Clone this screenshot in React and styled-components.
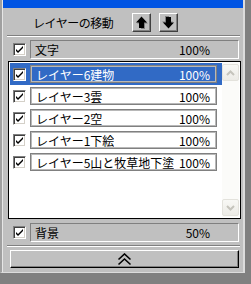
import React from "react";
import styled, { createGlobalStyle } from "styled-components";

const Global = createGlobalStyle`
  html, body { margin: 0; padding: 0; }
  body {
    background: #808080;
    font-family: "Noto Sans CJK JP", "Liberation Sans", sans-serif;
    font-size: 12px;
    color: #000;
  }
`;

const Panel = styled.div`
  width: 241px;
  height: 272px;
  background: #c0c0c0;
  border-left: 2px solid #a0a0a0;
  border-right: 2px solid #dcdcdc;
  border-bottom: 1px solid #dcdcdc;
  box-shadow: inset 1px 0 0 #e6e6e6;
  display: flex;
  flex-direction: column;
`;

const TitleBar = styled.div`
  height: 8px;
  margin-left: 1px;
  background: #0054e3;
  flex: none;
`;

const Header = styled.div`
  height: 27px;
  box-sizing: border-box;
  padding: 5px 0 0 31px;
  display: flex;
  align-items: flex-start;
  flex: none;
`;

const Label = styled.div`
  width: 99px;
  line-height: 19px;
  font-size: 12px;
  letter-spacing: -0.5px;
  white-space: nowrap;
`;

const ArrowButton = styled.div`
  width: 19px;
  height: 19px;
  box-sizing: border-box;
  margin-right: ${(p) => p.$gap || 0}px;
  border: 1px solid;
  border-color: #fff #404040 #404040 #fff;
  box-shadow: inset -1px -1px 0 #808080;
  background: #c0c0c0;
  display: flex;
  align-items: center;
  justify-content: center;
`;

const Etched = styled.div`
  height: 0;
  margin: ${(p) => p.$top || 0}px 3px 0 5px;
  border-top: 1px solid #808080;
  border-bottom: 1px solid #fff;
  flex: none;
`;

const FixedRow = styled.div`
  height: 19px;
  margin-top: ${(p) => p.$top}px;
  padding-left: 11px;
  display: flex;
  align-items: center;
  flex: none;
`;

const SunkenField = styled.div`
  flex: 1;
  height: 19px;
  box-sizing: border-box;
  margin: 0 4px 0 4px;
  border: 1px solid;
  border-color: #808080 #fff #fff #808080;
  display: flex;
  align-items: center;
  justify-content: space-between;
  padding: 0 28px 0 4px;
  font-size: 12px;
  white-space: nowrap;
`;

const Box = styled.div`
  width: 13px;
  height: 13px;
  box-sizing: border-box;
  flex: none;
  background: #fff;
  border: 1px solid;
  border-color: #808080 #fff #fff #808080;
  box-shadow: inset 1px 1px 0 #404040, inset -1px -1px 0 #d4d0c8;
  display: flex;
  align-items: center;
  justify-content: center;
`;

const List = styled.div`
  height: 158px;
  box-sizing: border-box;
  margin: 2px 2px 0 6px;
  border: 1px solid #000;
  padding: 1px;
  background: #fff;
  display: flex;
  flex: none;
`;

const Rows = styled.div`
  flex: 1;
  display: flex;
  flex-direction: column;
`;

const Row = styled.div`
  height: 22px;
  flex: none;
  padding-left: 3px;
  display: flex;
  align-items: center;
  background: ${(p) => (p.$selected ? "#316ac5" : "transparent")};
`;

const ItemBox = styled.div`
  flex: 1;
  height: 18px;
  box-sizing: border-box;
  margin: 0 5px 0 4px;
  border: 1px solid #808080;
  box-shadow: inset 0 0 0 1px #b8b8b8;
  background: ${(p) => (p.$selected ? "#316ac5" : "#fff")};
  color: ${(p) => (p.$selected ? "#fff" : "#000")};
  display: flex;
  align-items: center;
  justify-content: space-between;
  padding: 0 6px 0 5px;
  font-size: 12px;
  white-space: nowrap;
`;

const Name = styled.span`
  overflow: hidden;
`;

const ScrollBar = styled.div`
  width: 17px;
  background: #fbfbf9;
  display: flex;
  flex-direction: column;
  justify-content: space-between;
  padding: 1px 0;
`;

const ScrollButton = styled.div`
  width: 17px;
  height: 17px;
  box-sizing: border-box;
  border: 1px solid #e3e2dc;
  border-radius: 2px;
  background: linear-gradient(#f8f8f5, #ecebe6);
  display: flex;
  align-items: center;
  justify-content: center;
`;

const BigButton = styled.div`
  height: 18px;
  box-sizing: border-box;
  margin: 3px 4px 0 8px;
  border: 1px solid;
  border-color: #fff #000 #000 #fff;
  box-shadow: inset -1px -1px 0 #808080;
  display: flex;
  align-items: center;
  justify-content: center;
  flex: none;
`;

const Check = () => (
  <svg width="9" height="9" viewBox="0 0 9 9">
    <path d="M1 4 L3 6 L8 1 L8 3 L3 8 L1 6 Z" fill="#000" />
  </svg>
);

const UpArrow = ({ down }) => (
  <svg width="13" height="13" viewBox="0 0 13 13" style={down ? { transform: "rotate(180deg)" } : undefined}>
    <polygon points="7.5,2 13,7.5 10,7.5 10,13 6,13 6,7.5 2,7.5" fill="#808080" />
    <polygon points="6.5,0.5 12,6.5 9,6.5 9,12 4,12 4,6.5 1,6.5" fill="#000" />
  </svg>
);

const ScrollArrow = ({ down }) => (
  <svg width="9" height="6" viewBox="0 0 9 6">
    <path d={down ? "M1 1 L4.5 4.5 L8 1" : "M1 5 L4.5 1.5 L8 5"} stroke="#c5c4bc" strokeWidth="2" fill="none" />
  </svg>
);

const DoubleChevron = () => (
  <svg width="15" height="13" viewBox="0 0 15 13">
    <path d="M1.5 6.5 L7.5 1 L13.5 6.5 M1.5 11.5 L7.5 6 L13.5 11.5" stroke="#000" strokeWidth="1.6" fill="none" />
  </svg>
);

const layers = [
  { name: "レイヤー6建物", selected: true },
  { name: "レイヤー3雲" },
  { name: "レイヤー2空" },
  { name: "レイヤー1下絵" },
  { name: "レイヤー5山と牧草地下塗" },
];

export default function App() {
  return (
    <>
      <Global />
      <Panel>
        <TitleBar />
        <Header>
          <Label>レイヤーの移動</Label>
          <ArrowButton $gap={8}>
            <UpArrow />
          </ArrowButton>
          <ArrowButton>
            <UpArrow down />
          </ArrowButton>
        </Header>
        <Etched />
        <FixedRow $top={3}>
          <Box>
            <Check />
          </Box>
          <SunkenField>
            <span>文字</span>
            <span>100%</span>
          </SunkenField>
        </FixedRow>
        <List>
          <Rows>
            {layers.map((l) => (
              <Row key={l.name} $selected={l.selected}>
                <Box>
                  <Check />
                </Box>
                <ItemBox $selected={l.selected}>
                  <Name>{l.name}</Name>
                  <span>100%</span>
                </ItemBox>
              </Row>
            ))}
          </Rows>
          <ScrollBar>
            <ScrollButton>
              <ScrollArrow />
            </ScrollButton>
            <ScrollButton>
              <ScrollArrow down />
            </ScrollButton>
          </ScrollBar>
        </List>
        <FixedRow $top={4}>
          <Box>
            <Check />
          </Box>
          <SunkenField>
            <span>背景</span>
            <span>50%</span>
          </SunkenField>
        </FixedRow>
        <Etched $top={3} />
        <BigButton>
          <DoubleChevron />
        </BigButton>
      </Panel>
    </>
  );
}
